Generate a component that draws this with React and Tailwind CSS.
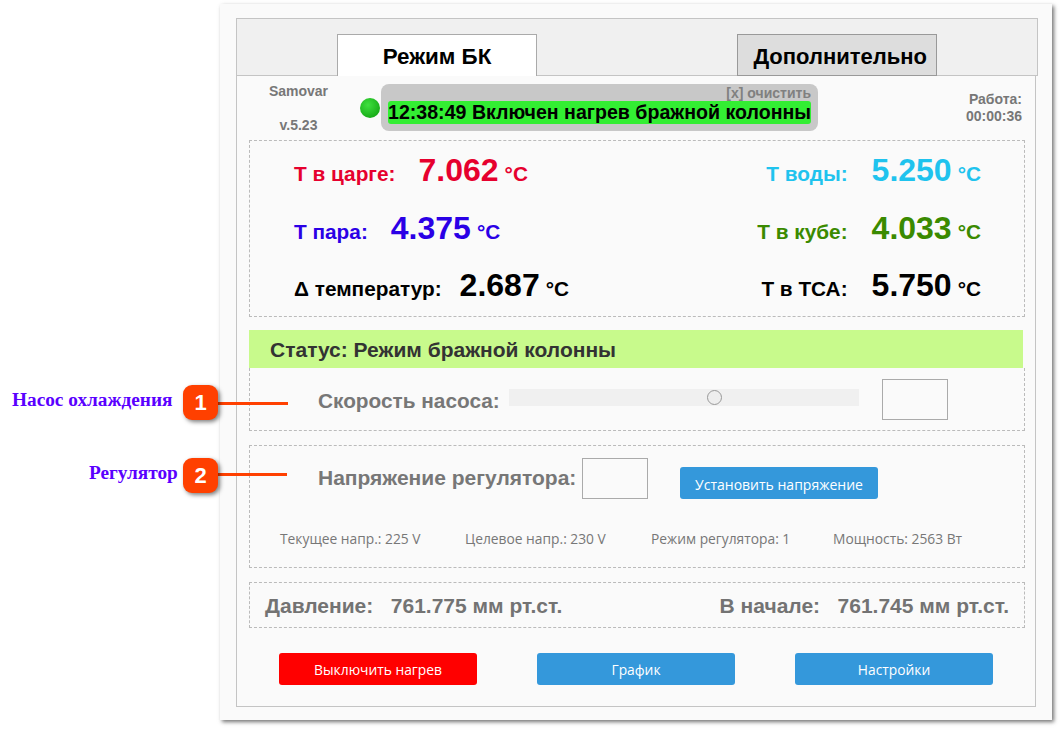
const sans = "font-['Liberation_Sans',Arial,sans-serif]";

const TempRow = ({ label, value, color, gap }) => (
  <div className={`flex items-baseline font-bold ${color}`}>
    <span className="text-[20.8px]">{label}</span>
    <span className={`text-[32px] ${gap}`}>{value}</span>
    <span className="text-[20.8px] ml-[6px]">°C</span>
  </div>
);

const temps = [
  [
    { label: 'Т в царге:', value: '7.062', color: 'text-[#e6002e]', gap: 'ml-[23px]' },
    { label: 'Т воды:', value: '5.250', color: 'text-[#1fc3ee]', gap: 'ml-[24px]' },
  ],
  [
    { label: 'Т пара:', value: '4.375', color: 'text-[#2a00e6]', gap: 'ml-[23px]' },
    { label: 'Т в кубе:', value: '4.033', color: 'text-[#3a8a00]', gap: 'ml-[24px]' },
  ],
  [
    { label: 'Δ температур:', value: '2.687', color: 'text-black', gap: 'ml-[18px]' },
    { label: 'Т в ТСА:', value: '5.750', color: 'text-black', gap: 'ml-[24px]' },
  ],
];

const regInfo = [
  { text: 'Текущее напр.: 225 V', width: 'w-[185px]' },
  { text: 'Целевое напр.: 230 V', width: 'w-[186px]' },
  { text: 'Режим регулятора: 1', width: 'w-[182px]' },
  { text: 'Мощность: 2563 Вт', width: 'w-[140px]' },
];

const Callout = ({ num, top, label, labelLeft, labelTop, lineTop, lineWidth }) => (
  <>
    <div className={`absolute ${labelLeft} ${labelTop} font-['Liberation_Serif',serif] font-bold text-[19.3px] leading-[20px] text-[#5a00ff] whitespace-nowrap`}>
      {label}
    </div>
    <div className={`absolute left-[218px] ${lineTop} ${lineWidth} h-[3px] bg-[#ff4000] z-10`} />
    <div className={`absolute left-[183px] ${top} w-[35px] h-[35px] rounded-[9px] bg-[#ff4000] shadow-[2px_2px_4px_rgba(0,0,0,0.5)] flex items-center justify-center text-white font-bold text-[22px] z-10`}>
      {num}
    </div>
  </>
);

export default function App() {
  return (
    <div className={`relative w-[1060px] h-[729px] bg-white overflow-hidden ${sans}`}>
      {/* Выноски */}
      <Callout num="1" top="top-[385px]" label="Насос охлаждения" labelLeft="left-[12px]" labelTop="top-[390px]" lineTop="top-[402px]" lineWidth="w-[70px]" />
      <Callout num="2" top="top-[458px]" label="Регулятор" labelLeft="left-[89px]" labelTop="top-[463px]" lineTop="top-[473px]" lineWidth="w-[69px]" />

      <div className="ml-[220px] mt-[4px] w-[832px] h-[716px] bg-[#fafafa] shadow-[2px_2px_4px_rgba(0,0,0,0.55)] pt-[14px] pl-[16px]">
        <div className="w-[802px] h-[689px] flex flex-col">
          {/* Вкладки */}
          <div className="h-[58px] shrink-0 bg-[#f0f0f0] border border-[#c4c4c4] flex items-end pl-[100px] gap-[200px]">
            <div className="w-[200px] h-[42px] -mb-px pt-[2px] bg-white border border-b-0 border-[#aaaaaa] flex items-center justify-center text-[22.4px] font-bold text-black">
              Режим БК
            </div>
            <div className="w-[200px] h-[42px] -mb-px pt-[2px] bg-[#dddddd] border border-[#999999] flex items-center justify-end pr-[9px] text-[22px] font-bold text-black">
              Дополнительно
            </div>
          </div>

          <div className="flex-1 w-[800px] border border-t-0 border-[#c4c4c4] pl-[12px] pr-[10px] flex flex-col">
            {/* Шапка */}
            <div className="h-[64px] shrink-0 relative flex items-start">
              <div className="w-[98px] pl-[1px] pt-[7px] flex flex-col items-center text-[14px] font-bold text-[#777777] leading-[16px] gap-[18px]">
                <span>Samovar</span>
                <span>v.5.23</span>
              </div>
              <div className="ml-[13px] mt-[22px] w-[20px] h-[20px] rounded-full bg-[radial-gradient(circle_at_40%_35%,#3fe03f,#0a9a0a)]" />
              <div className="ml-[1px] mt-[8px] w-[437px] h-[47px] bg-[#c8c8c8] rounded-[8px] px-[7px] flex flex-col items-stretch">
                <div className="h-[17px] text-right text-[14px] leading-[18px] font-bold text-[#808080]">[x] очистить</div>
                <div className="h-[23px] bg-[#33ee33] rounded-[3px] text-[19.6px] leading-[23px] font-bold text-black whitespace-nowrap">
                  12:38:49 Включен нагрев бражной колонны
                </div>
              </div>
              <div className="ml-auto mr-[3px] pt-[15px] text-right text-[14px] leading-[17px] font-bold text-[#777777]">
                <div>Работа:</div>
                <div>00:00:36</div>
              </div>
            </div>

            {/* Температуры */}
            <div className="h-[177px] shrink-0 border border-dashed border-[#bbbbbb] pl-[44px] pr-[43px] pb-[2px] flex flex-col justify-center">
              {temps.map((row, i) => (
                <div key={i} className="h-[58px] flex items-center justify-between">
                  <TempRow {...row[0]} />
                  <TempRow {...row[1]} />
                </div>
              ))}
            </div>

            {/* Статус */}
            <div className="mt-[13px] mr-[2px] h-[38px] shrink-0 bg-[#c8fa8c] pl-[21px] pt-[2px] flex items-center text-[21px] font-bold text-[#333333]">
              Статус: Режим бражной колонны
            </div>

            {/* Насос */}
            <div className="h-[63px] shrink-0 border border-dashed border-[#bbbbbb] border-t-0 pl-[68px] flex items-start">
              <span className="mt-[21px] text-[20.8px] leading-[24px] font-bold text-[#777777] w-[191px] whitespace-nowrap">Скорость насоса:</span>
              <div className="relative mt-[21px] w-[350px] h-[17px] bg-[#f0f0f0]">
                <div className="absolute left-[198px] top-[1px] w-[15px] h-[15px] rounded-full bg-[#eeeeee] border border-[#999999]" />
              </div>
              <div className="ml-[23px] mt-[11px] w-[66px] h-[41px] border border-[#aaaaaa] bg-[#fafafa]" />
            </div>

            {/* Регулятор */}
            <div className="mt-[14px] h-[123px] shrink-0 border border-dashed border-[#bbbbbb] flex flex-col">
              <div className="pl-[68px] pt-[12px] flex items-start">
                <span className="mt-[8px] text-[21px] leading-[24px] font-bold text-[#777777] w-[264px] whitespace-nowrap">Напряжение регулятора:</span>
                <div className="w-[66px] h-[41px] border border-[#aaaaaa] bg-[#fafafa]" />
                <button className="ml-[32px] mt-[9px] w-[198px] h-[32px] pt-[3px] rounded-[3px] bg-[#3498db] text-white text-[14px] font-['Open_Sans',sans-serif]">
                  Установить напряжение
                </button>
              </div>
              <div className="pl-[30px] mt-[30px] flex text-[13.8px] leading-[20px] text-[#777777] font-['Open_Sans',sans-serif]">
                {regInfo.map((item) => (
                  <span key={item.text} className={`${item.width} whitespace-nowrap`}>{item.text}</span>
                ))}
              </div>
            </div>

            {/* Давление */}
            <div className="mt-[14px] h-[46px] shrink-0 border border-dashed border-[#bbbbbb] pl-[15px] pr-[15px] pt-[1px] flex items-center justify-between text-[21px] font-bold text-[#737373] whitespace-pre">
              <span>Давление:   761.775 мм рт.ст.</span>
              <span>В начале:   761.745 мм рт.ст.</span>
            </div>

            {/* Кнопки */}
            <div className="mt-[25px] pl-[30px] flex gap-[60px]">
              <button className="w-[198px] h-[32px] pt-[3px] rounded-[3px] bg-[#ff0000] text-white text-[13.8px] font-['Open_Sans',sans-serif]">Выключить нагрев</button>
              <button className="w-[198px] h-[32px] pt-[3px] rounded-[3px] bg-[#3498db] text-white text-[13.8px] font-['Open_Sans',sans-serif]">График</button>
              <button className="w-[198px] h-[32px] pt-[3px] rounded-[3px] bg-[#3498db] text-white text-[13.8px] font-['Open_Sans',sans-serif]">Настройки</button>
            </div>
          </div>
        </div>
      </div>
    </div>
  );
}
